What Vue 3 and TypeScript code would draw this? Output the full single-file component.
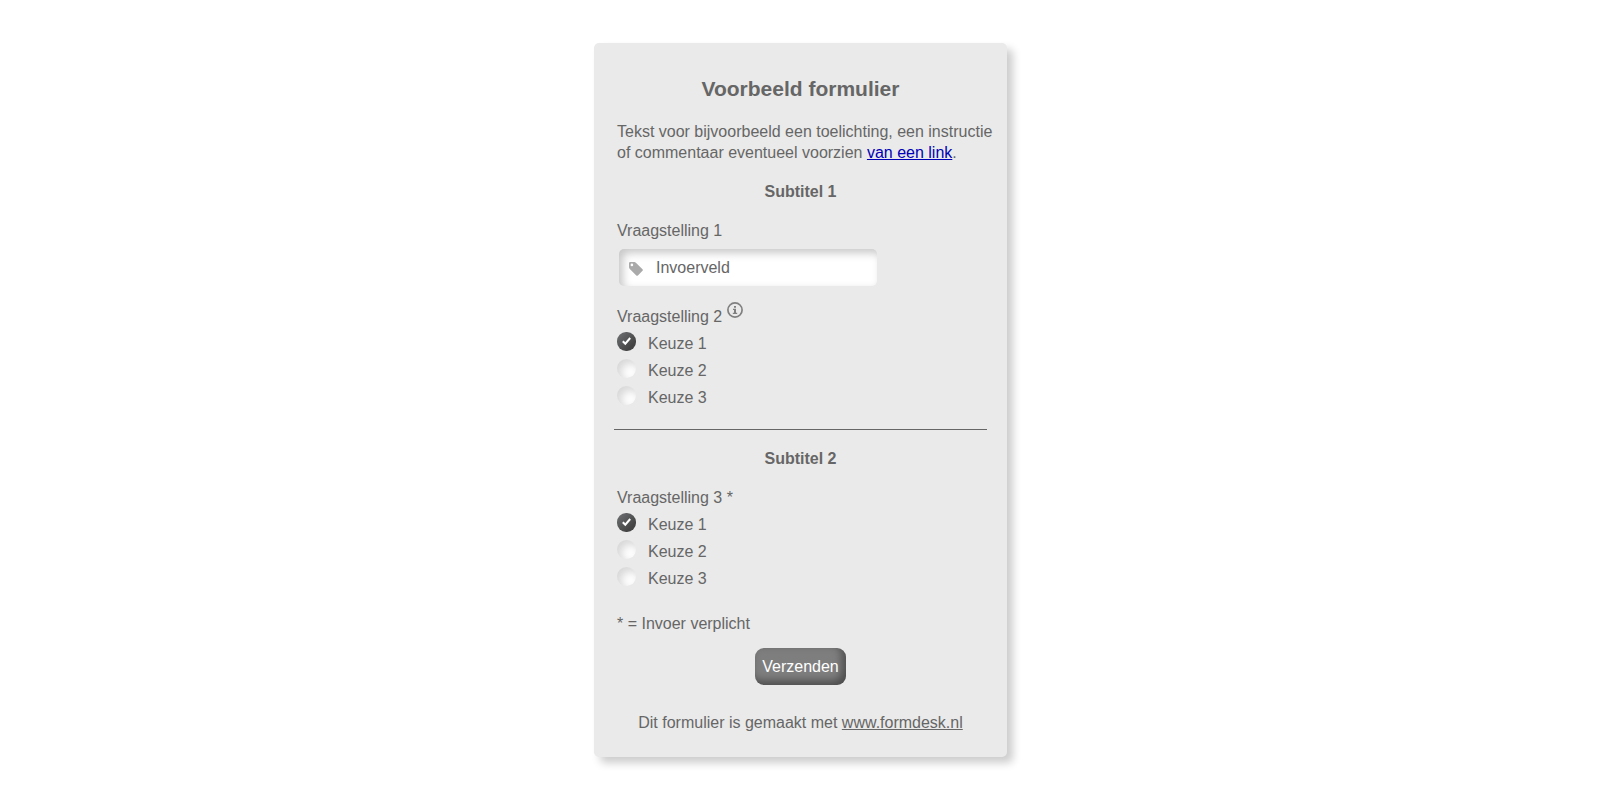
<script setup lang="ts">
import { ref } from 'vue'

const choices: string[] = ['Keuze 1', 'Keuze 2', 'Keuze 3']
const entry = ref('Invoerveld')
const answer2 = ref('Keuze 1')
const answer3 = ref('Keuze 1')
</script>

<template>
  <main class="page">
    <form class="card" @submit.prevent>
      <h1 class="title">Voorbeeld formulier</h1>
      <p class="intro">
        Tekst voor bijvoorbeeld een toelichting, een instructie of commentaar eventueel voorzien
        <a class="link" href="#">van een link</a>.
      </p>

      <h2 class="subtitle">Subtitel 1</h2>
      <label class="question" for="entry">Vraagstelling 1</label>
      <div class="field">
        <svg class="tag" viewBox="0 0 14 14" aria-hidden="true">
          <path
            fill-rule="evenodd"
            d="M1.2 0H5.4Q6.2 0 6.9.7L13.5 7.2Q14.3 8 13.5 8.8L8.9 13.4Q8.1 14.2 7.3 13.4L.8 6.9Q0 6.1 0 5.3V1.2Q0 0 1.2 0ZM2.9 1.6A1.3 1.3 0 1 0 2.9 4.2A1.3 1.3 0 1 0 2.9 1.6Z"
          />
        </svg>
        <input id="entry" v-model="entry" class="entry" type="text" />
      </div>

      <fieldset class="group">
        <legend class="question">
          Vraagstelling 2
          <button class="info" type="button" aria-label="Info">
            <svg viewBox="0 0 16 16" aria-hidden="true">
              <circle cx="8" cy="8" r="7.1" fill="none" stroke="currentColor" stroke-width="1.7" />
              <path
                fill="currentColor"
                d="M7 4H9V5.8H7ZM6 6.8H9V10.7H10.2V12H5.8V10.7H7V8H6Z"
              />
            </svg>
          </button>
        </legend>
        <label v-for="choice in choices" :key="choice" class="choice">
          <span class="mark">
            <input v-model="answer2" class="radio" type="radio" name="question2" :value="choice" />
            <svg class="check" viewBox="0 0 19 19" aria-hidden="true">
              <path d="M5.8 9.2L8.3 11.7L13.2 6" />
            </svg>
          </span>
          {{ choice }}
        </label>
      </fieldset>

      <hr class="rule" />

      <h2 class="subtitle">Subtitel 2</h2>
      <fieldset class="group">
        <legend class="question">Vraagstelling 3 *</legend>
        <label v-for="choice in choices" :key="choice" class="choice">
          <span class="mark">
            <input v-model="answer3" class="radio" type="radio" name="question3" :value="choice" />
            <svg class="check" viewBox="0 0 19 19" aria-hidden="true">
              <path d="M5.8 9.2L8.3 11.7L13.2 6" />
            </svg>
          </span>
          {{ choice }}
        </label>
      </fieldset>

      <p class="note">* = Invoer verplicht</p>
      <button class="send" type="submit">Verzenden</button>
      <p class="footer">Dit formulier is gemaakt met <a href="#">www.formdesk.nl</a></p>
    </form>
  </main>
</template>

<style>
body {
  margin: 0;
  background: #fff;
}
</style>

<style scoped>
.page {
  display: flex;
  justify-content: center;
  padding: 43px 0 43px 1px;
  font-family: 'Liberation Sans', Arial, sans-serif;
  font-size: 16px;
  line-height: 21px;
  color: #666;
}
.card {
  box-sizing: border-box;
  width: 100%;
  max-width: 413px;
  padding: 32px 20px 24px;
  border-radius: 5px;
  background: #eaeaea;
  box-shadow: 6px 6px 8px rgba(0, 0, 0, 0.2);
}
.title {
  margin: 0;
  font-size: 21px;
  line-height: 28px;
  text-align: center;
}
/* The text may run on into the card's right padding. */
.intro {
  margin: 18px -16px 18px 3px;
}
.link {
  color: #0000b8;
}
.subtitle {
  margin: 0 0 18px;
  font-size: 16px;
  line-height: 21px;
  text-align: center;
}
.question {
  display: block;
  margin: 0 3px;
  padding: 0;
}
.field {
  position: relative;
  max-width: 258px;
  margin: 8px 5px 20px;
}
.tag {
  position: absolute;
  top: 13px;
  left: 10px;
  width: 14px;
  height: 14px;
  fill: #aaa;
}
.entry {
  display: block;
  box-sizing: border-box;
  width: 100%;
  height: 37px;
  padding: 0 8px 0 37px;
  border: 0;
  border-radius: 5px;
  background: #fff;
  box-shadow: inset 4px 4px 8px rgba(0, 0, 0, 0.22);
  font: inherit;
  color: #666;
}
.group {
  margin: 0;
  padding: 0;
  border: 0;
}
.group .question {
  margin-bottom: 3px;
}
.info {
  width: 16px;
  height: 16px;
  margin: -4px 0 0;
  padding: 0;
  border: 0;
  background: none;
  color: #808080;
  vertical-align: top;
}
.info svg {
  display: block;
  width: 16px;
  height: 16px;
}
.choice {
  display: flex;
  gap: 12px;
  margin: 0 3px;
  line-height: 27px;
}
.mark {
  display: grid;
  width: 19px;
  height: 19px;
  margin-top: 2px;
}
.radio,
.check {
  grid-area: 1 / 1;
  width: 19px;
  height: 19px;
  margin: 0;
}
.radio {
  appearance: none;
  border-radius: 50%;
  background: #fff;
  box-shadow: inset 4px 4px 8px rgba(0, 0, 0, 0.16);
}
.radio:checked {
  border-radius: 9px;
  background: linear-gradient(135deg, #707274, #444 75%);
  box-shadow: none;
}
.check {
  visibility: hidden;
  pointer-events: none;
  fill: none;
  stroke: #fff;
  stroke-width: 2;
}
.radio:checked + .check {
  visibility: visible;
}
.rule {
  height: 1px;
  margin: 18px 0;
  border: 0;
  background: #666;
}
.note {
  margin: 21px 3px 14px;
}
.send {
  display: block;
  height: 37px;
  margin: 0 auto 27px;
  padding: 0 7px;
  border: 0;
  border-radius: 9px;
  background: #7e7e7e;
  box-shadow: inset -4px -4px 8px rgba(0, 0, 0, 0.4);
  font: inherit;
  color: #fff;
}
.footer {
  margin: 0;
  text-align: center;
}
.footer a {
  color: inherit;
}
</style>
